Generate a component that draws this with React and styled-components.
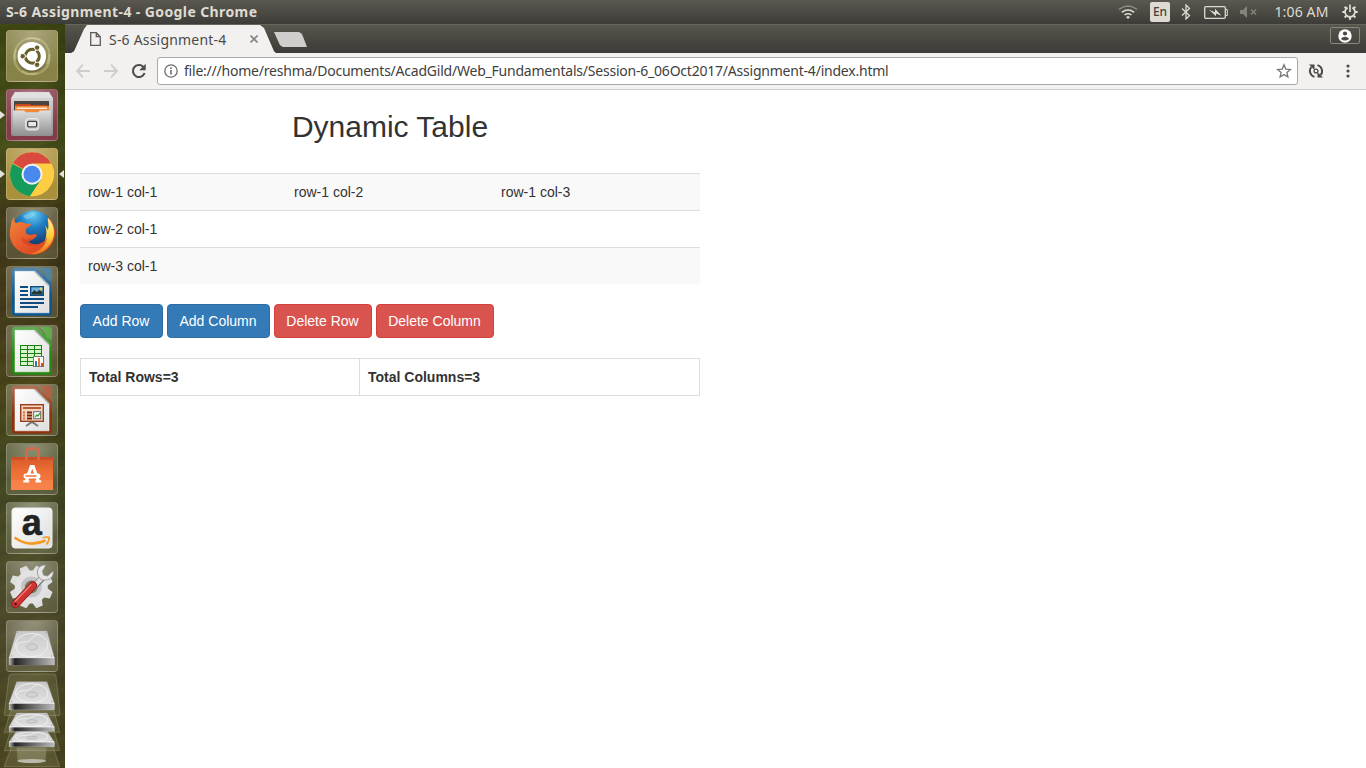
import React from "react";
import styled, { createGlobalStyle, css } from "styled-components";

const Global = createGlobalStyle`
  *, *::before, *::after { box-sizing: border-box; }
  html, body { margin: 0; padding: 0; background: #fff; overflow: hidden; }
  svg { display: block; flex: none; }
`;

const uiFont = css`font-family: "Noto Sans", "Open Sans", sans-serif;`;

const Desktop = styled.div`
  width: 1366px;
  height: 768px;
  display: flex;
  flex-direction: column;
  overflow: hidden;
`;
const Panel = styled.header`
  ${uiFont}
  height: 24px;
  flex: none;
  display: flex;
  align-items: center;
  justify-content: space-between;
  padding: 0 2px 0 6px;
  color: #dfdbd2;
  background: linear-gradient(#5a584f, #3d3c38);
`;
const PanelTitle = styled.span`
  font-size: 14px;
  line-height: 24px;
  font-weight: 700;
  letter-spacing: 0.4px;
  white-space: nowrap;
`;
const Indicators = styled.div`
  display: flex;
  align-items: center;
  height: 24px;
`;
const Slot = styled.div`
  width: ${(p) => p.$w}px;
  display: flex;
  justify-content: center;
  align-items: center;
  flex: none;
`;
const Lang = styled.div`
  width: 20px;
  height: 20px;
  border-radius: 2px;
  background: #dfdbd2;
  color: #45433d;
  font-size: 12px;
  line-height: 20px;
  font-weight: 500;
  text-align: center;
`;
const Clock = styled.span`
  font-size: 14px;
  line-height: 24px;
  letter-spacing: 0.15px;
  white-space: nowrap;
`;
const Workspace = styled.div`
  flex: 1;
  display: flex;
  min-height: 0;
`;
const Launcher = styled.nav`
  width: 65px;
  flex: none;
  padding-top: 6px;
  background:
    repeating-linear-gradient(160deg, rgba(120,130,50,.06) 0 3px, transparent 6px 11px, rgba(20,20,0,.07) 14px 16px, transparent 19px 23px),
    linear-gradient(90deg, rgba(0,0,0,.05), transparent 60%, rgba(0,0,0,.15) 100%),
    linear-gradient(#3f4812 0, #4a531c 16%, #433b18 26%, #463c1a 38%, #4c481a 50%, #454a22 60%, #4e4e2a 72%, #4f4b2b 82%, #4e4922 100%);
`;
const Tiles = styled.div`
  display: flex;
  flex-direction: column;
  align-items: center;
  gap: 7px;
  padding-right: 1px;
`;
const Tile = styled.div`
  position: relative;
  width: 52px;
  height: 52px;
  border-radius: 4px;
  border: 1px solid rgba(255, 255, 255, 0.2);
  background: radial-gradient(circle at 50% 0, rgba(255,255,255,.35), rgba(255,255,255,.07) 75%), ${(p) => p.$bg || "rgba(150,150,110,.16)"};
  & > svg { margin: -1px; }
`;
const Pip = styled.i`
  position: absolute;
  top: 21px;
  ${(p) => (p.$right ? "right: -7px; border-right: 5px solid #e4e2dc;" : "left: -7px; border-left: 5px solid #e4e2dc;")}
  border-top: 4px solid transparent;
  border-bottom: 4px solid transparent;
`;
const Browser = styled.div`
  flex: 1;
  display: flex;
  flex-direction: column;
  min-width: 0;
  background: #fff;
`;
const TabStrip = styled.div`
  ${uiFont}
  height: 29px;
  flex: none;
  display: flex;
  align-items: flex-start;
  padding-left: 6px;
  border-top: 1px solid #67655c;
  background: linear-gradient(#57554c, #3c3b37);
`;
const Tab = styled.div`
  width: 205px;
  height: 28px;
  display: flex;
  align-items: center;
  padding: 0 18px 0 19px;
  background: #f2f1f0;
  clip-path: polygon(0 100%, 3px 94%, 13px 4px, 16px 0, 189px 0, 193px 3px, 203px 94%, 205px 100%);
`;
const TabTitle = styled.span`
  flex: 1;
  margin-left: 8px;
  font-size: 14px;
  line-height: 27px;
  letter-spacing: 0.2px;
  color: #4b4a47;
  white-space: nowrap;
`;
const NewTab = styled.div`
  width: 33px;
  height: 15px;
  margin: 7px 0 0 -2px;
  background: #d0cecd;
  clip-path: polygon(0 0, 25px 0, 28px 2px, 33px 100%, 9px 100%, 6px 88%);
`;
const Profile = styled.div`
  width: 30px;
  height: 17px;
  margin: 2px 6px 0 auto;
  border: 1px solid #8a877d;
  border-radius: 2px;
  display: flex;
  align-items: center;
  justify-content: center;
`;
const Toolbar = styled.div`
  ${uiFont}
  height: 37px;
  flex: none;
  display: flex;
  align-items: center;
  padding-left: 4px;
  background: #f2f1f0;
  border-bottom: 1px solid #cfcecd;
`;
const UrlBox = styled.div`
  width: 1141px;
  height: 28px;
  display: flex;
  align-items: center;
  padding: 0 5px 0 6px;
  margin-left: 4px;
  background: #fff;
  border: 1px solid #a9a8a7;
  border-radius: 3px;
`;
const Url = styled.span`
  flex: 1;
  margin-left: 6px;
  font-size: 14px;
  line-height: 26px;
  letter-spacing: -0.22px;
  color: #41403e;
  white-space: nowrap;
`;
const Page = styled.main`
  width: 620px;
  margin-left: 15px;
  font: 14px/20px "Liberation Sans", Arial, sans-serif;
  color: #333;
`;
const Heading = styled.h2`
  margin: 20px 0 30px;
  font-size: 30px;
  line-height: 33px;
  font-weight: 500;
  text-align: center;
`;
const Grid = styled.div`
  margin-bottom: 20px;
`;
const GridRow = styled.div`
  display: grid;
  grid-template-columns: 206px 207px 207px;
  height: 37px;
  padding-top: 8px;
  border-top: 1px solid #ddd;
  background: ${(p) => (p.$odd ? "#f9f9f9" : "#fff")};
  & > span { padding-left: 8px; }
`;
const Buttons = styled.div`
  display: flex;
  gap: 4px;
  margin-bottom: 20px;
`;
const Button = styled.button`
  width: ${(p) => p.$w}px;
  height: 34px;
  padding: 0 1px 0 0;
  font: 14px/20px "Liberation Sans", Arial, sans-serif;
  color: #fff;
  border-radius: 4px;
  border: 1px solid ${(p) => (p.$danger ? "#d43f3a" : "#2e6da4")};
  background: ${(p) => (p.$danger ? "#d9534f" : "#337ab7")};
`;
const Totals = styled.div`
  display: grid;
  grid-template-columns: 278px 1fr;
  height: 38px;
  border: 1px solid #ddd;
  font-weight: 700;
`;
const Total = styled.div`
  padding: 8px;
  & + & { border-left: 1px solid #ddd; }
`;

const Svg = ({ s = 52, children }) => (
  <svg width={s} height={s} viewBox={`0 0 ${s} ${s}`}>{children}</svg>
);

const Defs = () => (
  <svg width="0" height="0" style={{ position: "absolute" }}>
    <defs>
      <linearGradient id="steel" x2="0" y2="1"><stop stopColor="#dedede" /><stop offset="1" stopColor="#8f8f8f" /></linearGradient>
      <linearGradient id="paper" x2="1" y2="1"><stop stopColor="#fff" /><stop offset="1" stopColor="#dedede" /></linearGradient>
      <linearGradient id="bag" x2="0" y2="1"><stop stopColor="#d9582a" /><stop offset=".5" stopColor="#ef7136" /><stop offset="1" stopColor="#f47f45" /></linearGradient>
      <linearGradient id="plate" x2="0" y2="1"><stop stopColor="#c9c9c9" /><stop offset="1" stopColor="#e8e8e8" /></linearGradient>
      <linearGradient id="edge"><stop stopColor="#c0c0c0" /><stop offset=".13" stopColor="#222" /><stop offset=".4" stopColor="#555" /><stop offset="1" stopColor="#bbb" /></linearGradient>
      <radialGradient id="globe" cx=".5" cy=".1" r=".8"><stop stopColor="#6acdf0" /><stop offset=".4" stopColor="#2180c4" /><stop offset="1" stopColor="#132e68" /></radialGradient>
      <linearGradient id="fox" x2="1" y2="1"><stop stopColor="#ef8a3a" /><stop offset=".5" stopColor="#e8582b" /><stop offset="1" stopColor="#d33b1c" /></linearGradient>
      <linearGradient id="flame" x2="0" y2="1"><stop stopColor="#fff4a0" /><stop offset=".5" stopColor="#fccf3a" /><stop offset="1" stopColor="#ee6c22" /></linearGradient>
      <linearGradient id="sheen" x2="0" y2="1"><stop stopColor="#fff" stopOpacity=".3" /><stop offset=".6" stopColor="#fff" stopOpacity="0" /></linearGradient>
    </defs>
  </svg>
);

const UbuntuIcon = () => (
  <Svg>
    <g fill="none" stroke="#e9e6b0" strokeOpacity=".32" strokeWidth="2">
      <path d="M9 30C6 14 20 4 34 10" /><path d="M21 9C38 5 48 20 41 34" /><path d="M43 24c3 17-14 25-27 17" /><path d="M31 43C15 48 4 34 10 19" />
    </g>
    <circle cx="25.8" cy="27.4" r="14.6" fill="#000" opacity=".2" />
    <circle cx="25.8" cy="26.2" r="14.3" fill="#fff" />
    <circle cx="26.3" cy="26.2" r="7" fill="none" stroke="#68602a" strokeWidth="3" />
    <g stroke="#fff" strokeWidth="1.2"><path d="M16 26.2h6M31.5 17.2l-3 5.2M31.5 35.2l-3-5.2" /></g>
    <g fill="#68602a" stroke="#fff" strokeWidth=".9"><circle cx="16.7" cy="26.2" r="2.7" /><circle cx="31.1" cy="17.6" r="2.7" /><circle cx="31.1" cy="34.8" r="2.7" /></g>
  </Svg>
);
const FilesIcon = () => (
  <Svg>
    <path d="M9 3h34l4 6v36q0 2-2 2H7q-2 0-2-2V9z" fill="url(#steel)" />
    <path d="M9 3h34l3 6H6z" fill="#e0e0e0" />
    <path d="M8 12h35v11H8z" fill="#4b4643" />
    <path d="M10 15h14l1 1h16v7H9v-7z" fill="#c94b1c" />
    <path d="M9 17h34v6H9z" fill="#ef8a3b" /><path d="M11 18.6h30v1.2H11z" fill="#fff" />
    <path d="M7 21.5h11l2 2h12l2-2h11V45q0 2-2 2H9q-2 0-2-2z" fill="url(#steel)" />
    <rect x="19.7" y="29.5" width="13" height="11.5" rx="2.5" fill="#cfcfcf" stroke="#ececec" />
    <rect x="21.7" y="32.4" width="9" height="5.4" rx="1" fill="#e8e8e8" stroke="#444" strokeWidth="1.3" />
  </Svg>
);
const ChromeIcon = () => (
  <Svg>
    <circle cx="26" cy="26.2" r="22" fill="#ffcd43" />
    <path d="M26 26.2L6.7 15.7A22 22 0 0 0 24.2 48.1L35.5 31.6z" fill="#149b5b" />
    <path d="M26 26.2L7 15A22 22 0 0 1 45.4 16H26z" fill="#db4a3f" />
    <path d="M26 26.2L45.3 16A22 22 0 0 1 24.2 48.1L35 31.6z" fill="#ffcd43" />
    <path d="M26 15.6h19.1A22 22 0 0 1 48 26l-13 6z" fill="#ffcd43" />
    <circle cx="26" cy="26.2" r="10.5" fill="#f1f1f1" /><circle cx="26" cy="26.2" r="8.5" fill="#4989ee" />
  </Svg>
);
const FirefoxIcon = () => (
  <Svg>
    <circle cx="27" cy="24" r="20.5" fill="url(#globe)" />
    <path d="M17 9q8-5 13-3-2 4-6 5-4 3-7-2z" fill="#8fd8ef" opacity=".5" />
    <path d="M43 11c8 8 8 21 1 29-8 9-23 10-32 3C4 37 2 27 5 18c0-3 1-6 3-8 0 3 0 5 2 6 4-2 8-1 10 1 3-1 5 0 5 1-1 2-5 2-5 5-1 3 1 4 4 5 3 0 5-2 7 0 0 2-5 5-9 7 8 5 18 1 20-7 2-7 0-12-1-17z" fill="url(#fox)" />
    <path d="M42 11c8 8 8 21 0 29-5 6-12 8-18 7 9-2 16-8 17-17l-3 6c3-7 3-13 1-18l3 5c1-5 0-8 0-12z" fill="url(#flame)" />
    <path d="M15 29c2 4 6 5 10 2 1 2-1 4-4 4 5 4 12 3 15 0-3 5-16 6-20-1z" fill="#bd351d" opacity=".4" />
  </Svg>
);
const DocIcon = ({ c, light, children }) => (
  <Svg>
    <path d="M9 1.7h21.5L46 17v29.7q0 3-3 3H9q-3 0-3-3v-42q0-3 3-3z" fill={c} />
    <path d="M9 1.7h21.5L46 17v29.7q0 3-3 3H9q-3 0-3-3v-42q0-3 3-3z" fill="url(#sheen)" />
    <path d="M33.5 1.7H43q3 0 3 3v10.8q-3-2-5.5-2.7-.3-3-2.500-6z" fill={light} opacity=".65" />
    <path d="M9 5.3h19.5L43 19.8v27H9z" fill="url(#paper)" stroke="#fff" strokeWidth=".5" />
    <path d="M28.500 5.300L43 19.800" stroke="#b8bcbc" strokeWidth="1.5" />
    {children}
  </Svg>
);
const WriterIcon = () => (
  <DocIcon c="#0d568e" light="#3b8dc6">
    <path d="M14 21h8M14 25h8M14 29h8M14 33h24M14 37h24M14 41h18" stroke="#104c82" strokeWidth="2" />
    <rect x="24.7" y="20.7" width="12.6" height="8.6" fill="#6eb2df" stroke="#104c82" strokeWidth="1.4" />
    <path d="M25.5 28.6V27l3-3 2 2 3-2 3 2v2.6z" fill="#26372c" /><circle cx="35" cy="22.8" r="1.4" fill="#f8d34b" />
  </DocIcon>
);
const CalcIcon = () => (
  <DocIcon c="#23890f" light="#55c943">
    <path d="M14 20h22v21H14z" fill="#168013" />
    {[21, 25, 29, 33, 37].map((y) => [15, 22, 29].map((x) => <rect key={`${x}-${y}`} x={x} y={y} width="6" height="3" fill="#d9f3cd" />))}
    <rect x="27.5" y="31.5" width="10" height="10" fill="#fff" stroke="#777" />
    <path d="M29 36h2v5h-2z" fill="#2a78b8" /><path d="M32 33h2v8h-2z" fill="#ed7a22" /><path d="M35 38h2v3h-2z" fill="#c95016" />
  </DocIcon>
);
const ImpressIcon = () => (
  <DocIcon c="#8c340f" light="#d0563a">
    <path d="M26 37v2M20 42l6-4 6 4" stroke="#777" strokeWidth="2" fill="none" />
    <rect x="14.7" y="20.7" width="22.6" height="16.6" fill="#f2d4c0" stroke="#96401b" strokeWidth="1.4" />
    <path d="M17 24h18" stroke="#b65d2f" strokeWidth="2" />
    <path d="M17 28.5h2M17 31.5h2M17 34.5h2" stroke="#df713a" strokeWidth="2" />
    <path d="M21 28.5h5M21 31.5h5M21 34.5h5" stroke="#762707" strokeWidth="2" />
    <rect x="27.7" y="27.7" width="7" height="7" fill="#fff" stroke="#666" /><path d="M29 33l2-2 1 1 2-3" stroke="#27a32a" fill="none" strokeWidth="1.3" />
  </DocIcon>
);
const SoftwareIcon = () => (
  <Svg>
    <path d="M5 14h42v33H5z" fill="url(#bag)" /><path d="M5 14h42v3H5z" fill="#b9451f" opacity=".5" /><path d="M5 37h42v10H5z" fill="#ff8d54" opacity=".4" />
    <path d="M20.500 17V9.500q0-4 4-4h4q4 0 4 4V17" fill="none" stroke="#d56a4d" strokeWidth="2.6" />
    <g fill="none" stroke="#fff"><path d="M20.3 38.3l4.9-14.6h2l5.200 14.600" strokeWidth="3.2" /><path d="M17.300 38.300h6M29.400 38.300h5.800" strokeWidth="2.200" /></g>
    <rect x="17.500" y="30.500" width="17" height="5" rx="2.500" fill="#fff" /><path d="M19.500 33h11" stroke="#ed7138" strokeWidth="1.500" />
  </Svg>
);
const AmazonIcon = () => (
  <Svg>
    <rect x="6" y="6" width="40" height="40" rx="3" fill="url(#paper)" stroke="#eee" />
    <text x="25.8" y="33.3" textAnchor="middle" fontFamily="Liberation Sans" fontWeight="700" fontSize="36" stroke="#222" strokeWidth=".6" fill="#222">a</text>
    <path d="M8.500 35.500q14.500 10.500 31 3" fill="none" stroke="#f59a23" strokeWidth="2.600" /><path d="M36.500 35.800q5-1.500 6.700-.3.3 3-2.700 7" fill="none" stroke="#f59a23" strokeWidth="1.600" />
  </Svg>
);
const SettingsIcon = () => (
  <Svg>
    <g fill="#dedede">
      {[22.5, 67.5, 112.5, 157.5].map((a) => <path key={a} transform={`rotate(${a} 25.3 26)`} d="M21.800 4.500h7l1.700 7v29l-1.700 7h-7l-1.700-7v-29z" />)}
    </g>
    <circle cx="25.300" cy="26" r="16.500" fill="#e2e2e2" /><circle cx="25.300" cy="26" r="10.500" fill="#c4c4c4" /><circle cx="25.300" cy="26" r="6.500" fill="#7c7860" />
    <path d="M27 27L38 15" stroke="#777" strokeWidth="6.500" /><path d="M27 26.500L38 14.500" stroke="#ddd" strokeWidth="4.800" />
    <path d="M40 4c-5-.5-9 3-8.500 8 .3 5 4.500 8 8.500 7 5-.5 8-4.500 7-9l-5.500 5-4-1-1-4z" fill="#e6e6e6" stroke="#8d8d8d" strokeWidth=".8" />
    <path d="M9.500 43L27 24.500" stroke="#8f1416" strokeWidth="8" strokeLinecap="round" /><path d="M9.500 43L27 24.500" stroke="#cf3431" strokeWidth="6.500" strokeLinecap="round" /><path d="M9 40.500L25 23.700" stroke="#ec7f79" strokeWidth="1.500" strokeLinecap="round" />
    <circle cx="9.500" cy="43" r="1.400" fill="#641415" />
  </Svg>
);
const Drive = ({ top, height, front }) => (
  <g>
    <path d={`M50 ${top}H141L163 ${top + height}v${front}H27v-${front}z`} fill="url(#plate)" stroke="#aaa" />
    <ellipse cx="95" cy={top + height * 0.53} rx="49" ry={height * 0.44} fill="none" stroke="#f4f4f4" strokeWidth="2.500" />
    <path d={`M50 ${top + height * 0.62}C52 ${top + height * 0.3} 78 ${top + height * 0.5} 92 ${top + height * 0.32}S118 ${top + height * 0.1} 122 ${top + height * 0.16}`} fill="none" stroke="#f2f2f2" strokeWidth="2.500" />
    <ellipse cx="96" cy={top + height * 0.6} rx="16" ry={height * 0.12} fill="#d2d2d2" stroke="#adadad" strokeWidth="2" />
    <g fill="#999"><circle cx="53" cy={top + 4} r="2" /><circle cx="138" cy={top + 4} r="2" /><circle cx="35" cy={top + height - 5} r="2" /><circle cx="155" cy={top + height - 5} r="2" /></g>
    <path d={`M27 ${top + height}H163v${front}H27z`} fill="url(#edge)" /><path d={`M27 ${top + height}H163`} stroke="#fff" strokeWidth="2" />
  </g>
);
const DriveIcon = () => (
  <svg width="52" height="52" viewBox="18 12 156 156"><Drive top={45} height={80} front={22} /></svg>
);
const FoldedStack = () => (
  <svg width="65" height="96" viewBox="0 168 195 288">
    <g fill="#bdbd91" fillOpacity=".16" stroke="#ccccb0" strokeOpacity=".4" strokeWidth="2">
      <path d="M35 392h124l20 60H12z" /><path d="M33 340h128l18 64H13z" /><path d="M32 284h130l17 65H13z" /><path d="M33 174h128q6 0 7 7l12 112q0 6-6 6H18q-6 0-5-6l14-112q1-7 6-7z" />
    </g>
    <path d="M50 395h90l-4 41q-41 12-83 0z" fill="#b5b69b" opacity=".35" /><ellipse cx="95" cy="435" rx="43" ry="6" fill="#cfd0c5" opacity=".75" />
    <Drive top={345} height={33} front={14} /><Drive top={291} height={42} front={13} /><Drive top={197} height={65} front={19} />
  </svg>
);

const Wifi = () => (
  <svg width="20" height="14" viewBox="0 0 20 14" fill="none" stroke="#dfdbd2" strokeWidth="1.5">
    <path d="M.8 4.5q9.2-7 18.4 0" opacity=".45" /><path d="M3.8 7.4q6.2-4.6 12.4 0M6.5 10q3.5-2.6 7 0" /><path d="M8 12l2-1 2 1-2 2z" fill="#dfdbd2" stroke="none" />
  </svg>
);
const Bluetooth = () => (
  <svg width="10" height="16" viewBox="0 0 10 16" fill="none" stroke="#dfdbd2" strokeWidth="1.3"><path d="M1 4.5l7.5 7L5 15V1l3.500 3.500-7.500 7" /></svg>
);
const Battery = () => (
  <svg width="24" height="13" viewBox="0 0 24 13"><rect x=".7" y=".7" width="20.6" height="11.6" rx="1.2" fill="none" stroke="#dfdbd2" strokeWidth="1.3" /><path d="M22 3.500h1.300v6H22" fill="none" stroke="#dfdbd2" /><path d="M5 3.800l6 2.500V2.800l6.500 7-5.500-2.300v2.700z" fill="#dfdbd2" /></svg>
);
const Muted = () => (
  <svg width="18" height="12" viewBox="0 0 18 12"><path d="M0 4h3l4-4v12L3 8H0z" fill="#85837a" /><path d="M11 3.500l5 5M16 3.500l-5 5" stroke="#85837a" strokeWidth="1.5" /></svg>
);
const Gear = () => (
  <svg width="16" height="16" viewBox="0 0 16 16" fill="none" stroke="#dfdbd2">
    <path d="M5.600 3.600a5 5 0 1 0 4.800 0" strokeWidth="1.8" /><path d="M8 .5v7.500" strokeWidth="1.7" />
    <path d="M4.200 4.200L2.700 2.700M11.800 4.200l1.500-1.500M3 8H.3M13 8h2.700M4.200 12l-1.500 1.500M11.800 12l1.500 1.500M8 13.200v2.500" strokeWidth="2.200" />
  </svg>
);
const PageIcon = () => (
  <svg width="11" height="14" viewBox="0 0 11 14" fill="none" stroke="#5c5b59" strokeWidth="1.3"><path d="M.7.7h5.600l4 4v8.600H.7zM6.300.7v4h4" /></svg>
);
const Close = () => (
  <svg width="8" height="8" viewBox="0 0 8 8" stroke="#858483" strokeWidth="1.600"><path d="M.5.5l7 7M7.500.5l-7 7" /></svg>
);
const Person = () => (
  <svg width="14" height="14" viewBox="0 0 14 14"><circle cx="7" cy="7" r="6.700" fill="#fff" /><circle cx="7" cy="4.500" r="2.100" fill="#4b4942" /><path d="M2.800 9.700Q7 6 11.200 9.700 7 13.500 2.800 9.700z" fill="#4b4942" /></svg>
);
const Arrow = ({ flip }) => (
  <svg width="14" height="14" viewBox="0 0 14 14" fill="none" stroke="#cecdcc" strokeWidth="1.900"><path d={flip ? "M0 7h13M7 .7L13 7l-6 6.300" : "M14 7H1M7 .7L1 7l6 6.300"} /></svg>
);
const Reload = () => (
  <svg width="16" height="16" viewBox="0 0 16 16"><path d="M13.600 10A6 6 0 1 1 12.200 3.800" fill="none" stroke="#4d4c4a" strokeWidth="2.100" /><path d="M14.700.8v6.500H8.200z" fill="#4d4c4a" /></svg>
);
const Info = () => (
  <svg width="14" height="14" viewBox="0 0 14 14" fill="none" stroke="#6d6c6b"><circle cx="7" cy="7" r="6.200" strokeWidth="1.300" /><path d="M7 6v4.500M7 3.200V5" strokeWidth="1.600" /></svg>
);
const Star = () => (
  <svg width="16" height="16" viewBox="0 0 16 16"><path d="M8 1.800l1.800 4.300 4.600.4-3.500 3 1 4.500L8 11.600 4.100 14l1-4.500-3.500-3 4.600-.4z" fill="none" stroke="#777" strokeWidth="1.300" /></svg>
);
const Sync = () => (
  <svg width="16" height="16" viewBox="0 0 16 16" fill="none" stroke="#4a4948" strokeWidth="1.900">
    <path d="M6.500 13.900A6.200 6.200 0 0 1 3.300 4M9.500 2.100a6.200 6.200 0 0 1 3.200 9.900" />
    <path d="M1 1.500h5.500V7zM15 14.500H9.500V9z" fill="#4a4948" stroke="none" />
    <circle cx="8" cy="8" r="1.900" strokeWidth="1.300" />
  </svg>
);
const Dots = () => (
  <svg width="4" height="14" viewBox="0 0 4 14" fill="#4b4a49"><circle cx="2" cy="2" r="1.600" /><circle cx="2" cy="7" r="1.600" /><circle cx="2" cy="12" r="1.600" /></svg>
);

const apps = [
  { id: "dash", icon: <UbuntuIcon />, bg: "#80783a" },
  { id: "files", icon: <FilesIcon />, bg: "#7c2c3c", left: true },
  { id: "chrome", icon: <ChromeIcon />, bg: "#a5882d", left: true, right: true },
  { id: "firefox", icon: <FirefoxIcon /> },
  { id: "writer", icon: <WriterIcon /> },
  { id: "calc", icon: <CalcIcon /> },
  { id: "impress", icon: <ImpressIcon /> },
  { id: "software", icon: <SoftwareIcon /> },
  { id: "amazon", icon: <AmazonIcon /> },
  { id: "settings", icon: <SettingsIcon /> },
  { id: "drive", icon: <DriveIcon /> },
];
const rows = [
  ["row-1 col-1", "row-1 col-2", "row-1 col-3"],
  ["row-2 col-1", "", ""],
  ["row-3 col-1", "", ""],
];

export default function App() {
  return (
    <Desktop>
      <Global />
      <Defs />
      <Panel>
        <PanelTitle>S-6 Assignment-4 - Google Chrome</PanelTitle>
        <Indicators>
          <Slot $w={44}><Wifi /></Slot>
          <Slot $w={20}><Lang>En</Lang></Slot>
          <Slot $w={32}><Bluetooth /></Slot>
          <Slot $w={28}><Battery /></Slot>
          <Slot $w={38}><Muted /></Slot>
          <Slot $w={67}><Clock>1:06 AM</Clock></Slot>
          <Slot $w={29}><Gear /></Slot>
        </Indicators>
      </Panel>
      <Workspace>
        <Launcher>
          <Tiles>
            {apps.map((a) => (
              <Tile key={a.id} $bg={a.bg}>
                {a.icon}
                {a.left && <Pip />}
                {a.right && <Pip $right />}
              </Tile>
            ))}
          </Tiles>
          <FoldedStack />
        </Launcher>
        <Browser>
          <TabStrip>
            <Tab><PageIcon /><TabTitle>S-6 Assignment-4</TabTitle><Close /></Tab>
            <NewTab />
            <Profile><Person /></Profile>
          </TabStrip>
          <Toolbar>
            <Slot $w={28}><Arrow /></Slot>
            <Slot $w={28}><Arrow flip /></Slot>
            <Slot $w={28}><Reload /></Slot>
            <UrlBox>
              <Info />
              <Url>file:///home/reshma/Documents/AcadGild/Web_Fundamentals/Session-6_06Oct2017/Assignment-4/index.html</Url>
              <Star />
            </UrlBox>
            <Slot $w={35}><Sync /></Slot>
            <Slot $w={30}><Dots /></Slot>
          </Toolbar>
          <Page>
            <Heading>Dynamic Table</Heading>
            <Grid>
              {rows.map((r, i) => (
                <GridRow key={i} $odd={i % 2 === 0}>{r.map((c, j) => <span key={j}>{c}</span>)}</GridRow>
              ))}
            </Grid>
            <Buttons>
              <Button $w={83}>Add Row</Button>
              <Button $w={103}>Add Column</Button>
              <Button $w={98} $danger>Delete Row</Button>
              <Button $w={118} $danger>Delete Column</Button>
            </Buttons>
            <Totals>
              <Total>Total Rows=3</Total>
              <Total>Total Columns=3</Total>
            </Totals>
          </Page>
        </Browser>
      </Workspace>
    </Desktop>
  );
}
